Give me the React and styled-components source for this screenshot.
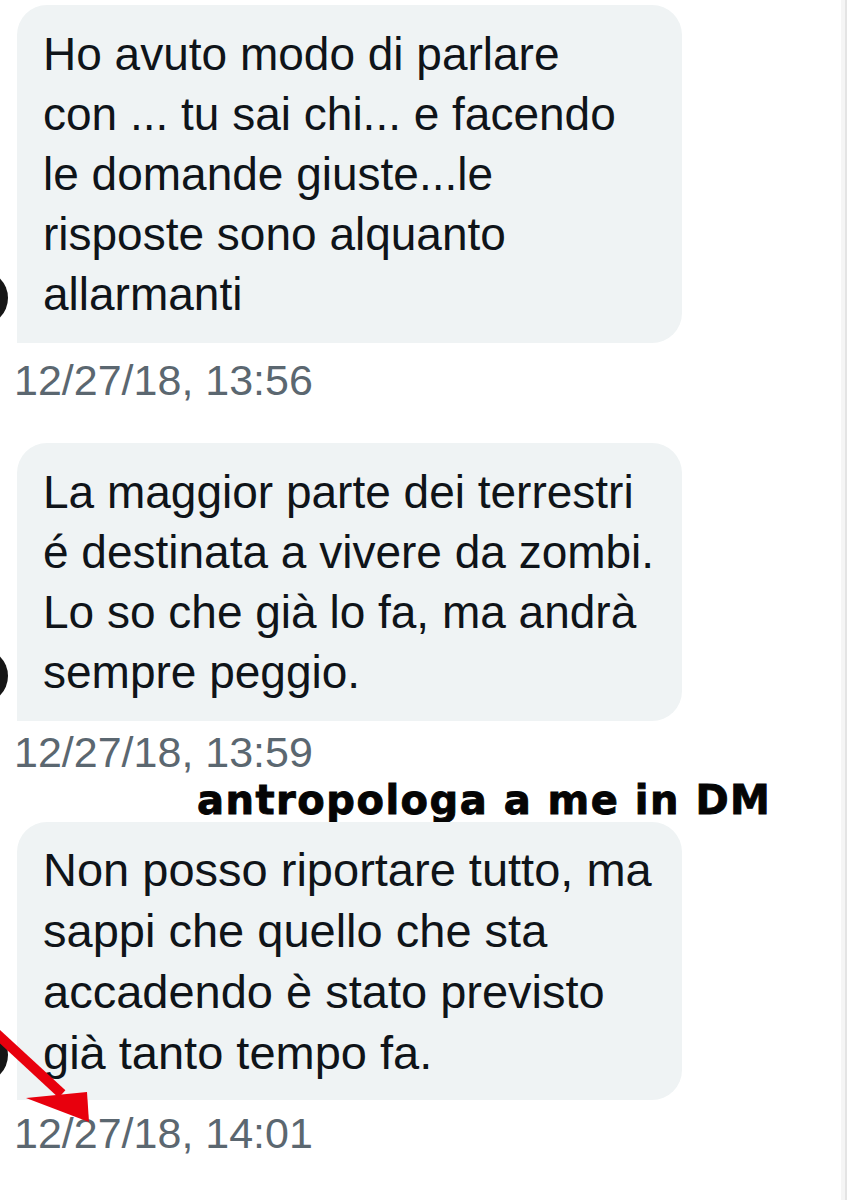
import React from "react";
import styled, { createGlobalStyle } from "styled-components";

const GlobalStyle = createGlobalStyle`
    html, body {
        margin: 0;
        padding: 0;
        background: #ffffff;
    }
`;

const Page = styled.div`
    position: relative;
    width: 847px;
    height: 1200px;
    overflow: hidden;
    background: #ffffff;
    box-shadow: inset -2px 0 0 #e4e4e4, inset -6px 0 0 #f5f5f5;
    font-family: "Liberation Sans", Arial, sans-serif;
    display: flex;
    flex-direction: column;
    padding-top: 5px;
    box-sizing: border-box;
`;

const Row = styled.div`
    display: flex;
    align-items: flex-end;
    margin-top: ${(props) => props.top || 0}px;
`;

const AvatarSlot = styled.div`
    width: 8px;
    height: 56px;
    margin-right: 9px;
    margin-bottom: 17px;
    overflow: hidden;
    flex-shrink: 0;
`;

const Avatar = styled.div`
    width: 56px;
    height: 56px;
    margin-left: -48px;
    border-radius: 50%;
    background: #161616;
`;

const Bubble = styled.div`
    width: 665px;
    box-sizing: border-box;
    padding: ${(props) => props.pad}px 18px ${(props) => props.pad}px 26px;
    background: #eff3f4;
    border-radius: 30px 30px 30px 0;
    color: #0f1419;
    font-size: ${(props) => props.size}px;
    line-height: ${(props) => props.lh}px;
`;

const Stamp = styled.div`
    margin-top: ${(props) => props.top}px;
    padding-left: 14px;
    color: #5b6770;
    font-size: 43px;
    line-height: 43px;
`;

const Caption = styled.div`
    margin-top: ${(props) => props.top}px;
    padding-left: 197px;
    font-family: "DejaVu Sans", sans-serif;
    font-weight: 800;
    font-size: 40px;
    line-height: 40px;
    letter-spacing: 1.5px;
    -webkit-text-stroke: 0.9px #050505;
    color: #050505;
`;

const Arrow = styled.svg`
    position: absolute;
    left: 0;
    top: 1020px;
    width: 110px;
    height: 120px;
    pointer-events: none;
`;

const messages = [
    {
        lines: ["Ho avuto modo di parlare", "con ... tu sai chi... e facendo", "le domande giuste...le", "risposte sono alquanto", "allarmanti"],
        time: "12/27/18, 13:56",
        top: 0,
        stampTop: 16,
        size: 46,
        lh: 60,
        pad: 19,
    },
    {
        lines: ["La maggior parte dei terrestri", "é destinata a vivere da zombi.", "Lo so che già lo fa, ma andrà", "sempre peggio."],
        time: "12/27/18, 13:59",
        top: 41,
        stampTop: 10,
        size: 46,
        lh: 60,
        pad: 19,
    },
    {
        lines: ["Non posso riportare tutto, ma", "sappi che quello che sta", "accadendo è stato previsto", "già tanto tempo fa."],
        time: "12/27/18, 14:01",
        top: 2,
        stampTop: 12,
        size: 47,
        lh: 61,
        pad: 17,
        caption: "antropologa a me in DM",
    },
];

export default function App() {
    return (
        <Page>
            <GlobalStyle />
            {messages.map((m, i) => (
                <React.Fragment key={i}>
                    {m.caption && <Caption top={6}>{m.caption}</Caption>}
                    <Row top={m.top}>
                        <AvatarSlot><Avatar /></AvatarSlot>
                        <Bubble size={m.size} lh={m.lh} pad={m.pad}>
                            {m.lines.map((l, j) => <div key={j}>{l}</div>)}
                        </Bubble>
                    </Row>
                    <Stamp top={m.stampTop}>{m.time}</Stamp>
                </React.Fragment>
            ))}
            <Arrow viewBox="0 1020 110 120">
                <line x1="-4" y1="1033" x2="62" y2="1094" stroke="#e8000d" strokeWidth="10" />
                <polygon points="26,1098 87,1092 89,1122" fill="#e8000d" />
            </Arrow>
        </Page>
    );
}
